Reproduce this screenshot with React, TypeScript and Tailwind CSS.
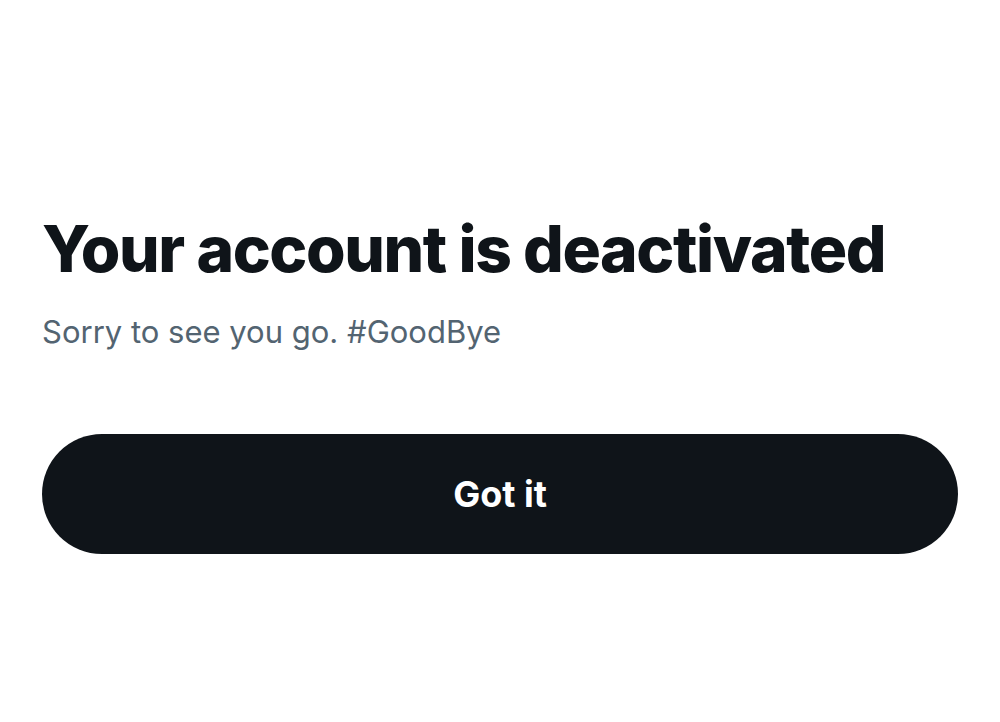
export default function App() {
  return (
    <div className="w-[1000px] h-[722px] bg-white flex flex-col px-[42px]" style={{ fontFamily: 'Inter, "Liberation Sans", sans-serif' }}>
      <h1 className="mt-[210px] text-[64px] leading-[78px] font-extrabold text-[#0f1419] tracking-[-1.4px] whitespace-nowrap">
        Your account is deactivated
      </h1>
      <p className="mt-[24px] text-[31px] leading-[40px] text-[#536471]">
        Sorry to see you go. #GoodBye
      </p>
      <button className="mt-[82px] w-[916px] h-[120px] rounded-full bg-[#0f1419] text-white text-[36px] font-bold flex items-center justify-center">
        Got it
      </button>
    </div>
  );
}
